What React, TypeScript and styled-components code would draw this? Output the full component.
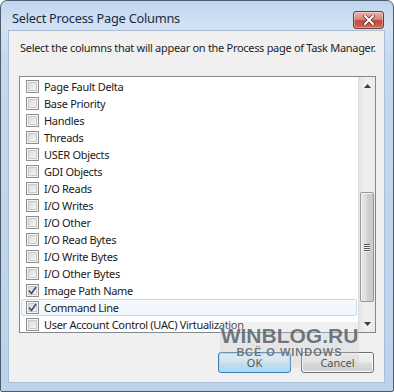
import React from "react";
import styled, { createGlobalStyle } from "styled-components";

const GlobalStyle = createGlobalStyle`
  html, body { margin: 0; padding: 0; background: #ffffff; }
  body { font-family: "Noto Sans", "Liberation Sans", sans-serif; }
  * { box-sizing: border-box; }
`;

const Stage = styled.div`
  position: relative;
  width: 394px;
  height: 392px;
`;

const Window = styled.div`
  width: 394px;
  height: 392px;
  display: flex;
  flex-direction: column;
  border: 1px solid #4d5d6d;
  border-radius: 7px 7px 2px 2px;
  background: linear-gradient(180deg, #bfd5ed 0px, #d4e3f4 26px, #c4d8ee 60px, #bcd3eb 100%);
  overflow: hidden;
`;

const TitleBar = styled.div`
  height: 29px;
  display: flex;
  align-items: flex-end;
  justify-content: space-between;
  padding: 0 9px 0 11px;
  flex-shrink: 0;
`;

const Title = styled.span`
  font-size: 12.8px;
  line-height: 16px;
  color: #1b2c40;
  letter-spacing: -0.25px;
  margin-bottom: 4px;
`;

const CloseButton = styled.div`
  width: 31px;
  height: 18px;
  margin-bottom: 1px;
  border: 1px solid #6e3b36;
  border-radius: 3px;
  background: linear-gradient(180deg, #e9b3a9 0%, #d8877b 45%, #c2473b 55%, #cf6a5d 100%);
  display: flex;
  align-items: center;
  justify-content: center;
  box-shadow: inset 0 0 0 1px rgba(255, 255, 255, 0.35);
`;

const Client = styled.div`
  flex: 1;
  margin: 0 8px 8px 7px;
  background: #f0f0f0;
  border: 1px solid #a9bed6;
  display: flex;
  flex-direction: column;
  padding: 9px 9px 9px 10px;
`;

const Instruction = styled.div`
  font-size: 11px;
  color: #1e1e1e;
  height: 16px;
  line-height: 16px;
  margin-left: 1px;
  letter-spacing: -0.3px;
  white-space: nowrap;
`;

const ListBox = styled.div`
  margin-top: 20px;
  height: 257px;
  width: 357px;
  border: 1px solid #828790;
  background: #ffffff;
  display: flex;
`;

const Rows = styled.div`
  flex: 1;
  display: flex;
  flex-direction: column;
  padding: 1px 0 0 1px;
  overflow: hidden;
`;

const Row = styled.div<{ $selected?: boolean }>`
  height: 17px;
  flex-shrink: 0;
  display: flex;
  align-items: center;
  gap: 5px;
  padding-left: 4px;
  margin-right: 1px;
  border: 1px solid ${(p) => (p.$selected ? "#c4ddf6" : "transparent")};
  border-radius: 2px;
  background: ${(p) => (p.$selected ? "linear-gradient(180deg, #f6fafe, #eef5fd)" : "transparent")};
  font-size: 11px;
  color: #1a1a1a;
  white-space: nowrap;
  letter-spacing: -0.3px;
`;

const Box = styled.div`
  width: 13px;
  height: 13px;
  flex-shrink: 0;
  border: 1px solid #8e8f8f;
  background: #f4f4f4;
  position: relative;
  display: flex;
  align-items: center;
  justify-content: center;
  &::before {
    content: "";
    position: absolute;
    inset: 1px;
    background: linear-gradient(135deg, #d8d8d8 0%, #ebebeb 60%, #f7f7f7 100%);
    border: 1px solid #cacaca;
  }
  svg { position: relative; }
`;

const ScrollBar = styled.div`
  width: 17px;
  display: flex;
  flex-direction: column;
  background: linear-gradient(90deg, #e3e3e3, #f0f0f0 40%, #eaeaea);
  border-left: 1px solid #e0e0e0;
`;

const ArrowCell = styled.div`
  height: 17px;
  display: flex;
  align-items: center;
  justify-content: center;
  flex-shrink: 0;
`;

const Track = styled.div`
  flex: 1;
  display: flex;
  flex-direction: column;
  padding: 0 1px;
`;

const TrackSpace = styled.div<{ $h: number }>`
  height: ${(p) => p.$h}px;
  flex-shrink: 0;
`;

const Thumb = styled.div`
  height: 110px;
  border: 1px solid #979797;
  border-radius: 2px;
  background: linear-gradient(90deg, #e6e6e6 0%, #dcdcdc 45%, #cfcfcf 55%, #c9c9c9 100%);
  box-shadow: inset 1px 1px 0 #f7f7f7;
  display: flex;
  align-items: center;
  justify-content: center;
`;

const Grip = styled.div`
  display: flex;
  flex-direction: column;
  gap: 1px;
  span {
    display: block;
    width: 6px;
    height: 1px;
    background: #555;
    box-shadow: 0 1px 0 #f4f4f4;
  }
`;

const ButtonRow = styled.div`
  margin-top: auto;
  display: flex;
  justify-content: flex-end;
  gap: 10px;
  padding-right: 1px;
`;

const Button = styled.div<{ $default?: boolean }>`
  width: 73px;
  height: 21px;
  border: 1px solid ${(p) => (p.$default ? "#3c7fb1" : "#707070")};
  border-radius: 3px;
  background: ${(p) =>
    p.$default
      ? "linear-gradient(180deg, #eaf6fd 0%, #d9f0fc 45%, #bee6fd 55%, #a7d9f5 100%)"
      : "linear-gradient(180deg, #f2f2f2 0%, #ebebeb 45%, #dddddd 55%, #cfcfcf 100%)"};
  box-shadow: ${(p) => (p.$default ? "inset 0 0 0 1px #9be0f8" : "inset 0 0 0 1px #fbfbfb")};
  display: flex;
  align-items: center;
  justify-content: center;
  font-size: 11px;
  color: #1a1a1a;
`;

const Watermark = styled.div`
  position: absolute;
  left: 220px;
  top: 322px;
  width: 139px;
  height: 46px;
  background: rgba(205, 205, 205, 0.3);
  display: flex;
  flex-direction: column;
  align-items: center;
  font-family: "Liberation Sans", Arial, sans-serif;
  font-weight: bold;
  color: rgba(68, 76, 86, 0.75);
  pointer-events: none;
`;

const WmTitle = styled.div`
  font-size: 21px;
  line-height: 21px;
  margin-top: 3px;
  text-shadow: 0 0 2px rgba(255, 255, 255, 0.6);
`;

const WmSub = styled.div`
  font-size: 11px;
  line-height: 11px;
  letter-spacing: 1px;
  margin-top: 1px;
  text-shadow: 0 0 2px rgba(255, 255, 255, 0.6);
`;

const items: { label: string; checked?: boolean; selected?: boolean }[] = [
  { label: "Page Fault Delta" },
  { label: "Base Priority" },
  { label: "Handles" },
  { label: "Threads" },
  { label: "USER Objects" },
  { label: "GDI Objects" },
  { label: "I/O Reads" },
  { label: "I/O Writes" },
  { label: "I/O Other" },
  { label: "I/O Read Bytes" },
  { label: "I/O Write Bytes" },
  { label: "I/O Other Bytes" },
  { label: "Image Path Name", checked: true },
  { label: "Command Line", checked: true, selected: true },
  { label: "User Account Control (UAC) Virtualization" },
];

const Check = () => (
  <svg width="9" height="9" viewBox="0 0 9 9">
    <path d="M1 4.5 L3.5 7.5 L8 1" fill="none" stroke="#3a4d7a" strokeWidth="1.6" />
  </svg>
);

const CloseX = () => (
  <svg width="12" height="10" viewBox="0 0 12 10">
    <path d="M2 1 L10 9 M10 1 L2 9" stroke="#5b2a25" strokeWidth="3.4" strokeLinecap="square" />
    <path d="M2 1 L10 9 M10 1 L2 9" stroke="#ffffff" strokeWidth="2" strokeLinecap="square" />
  </svg>
);

const UpArrow = () => (
  <svg width="7" height="4" viewBox="0 0 7 4">
    <path d="M0 4 L3.5 0 L7 4 Z" fill="#3b3b3b" />
  </svg>
);

const DownArrow = () => (
  <svg width="7" height="4" viewBox="0 0 7 4">
    <path d="M0 0 L3.5 4 L7 0 Z" fill="#3b3b3b" />
  </svg>
);

export default function App() {
  return (
    <>
      <GlobalStyle />
      <Stage>
        <Window>
          <TitleBar>
            <Title>Select Process Page Columns</Title>
            <CloseButton>
              <CloseX />
            </CloseButton>
          </TitleBar>
          <Client>
            <Instruction>
              Select the columns that will appear on the Process page of Task Manager.
            </Instruction>
            <ListBox>
              <Rows>
                {items.map((it) => (
                  <Row key={it.label} $selected={it.selected}>
                    <Box>{it.checked && <Check />}</Box>
                    {it.label}
                  </Row>
                ))}
              </Rows>
              <ScrollBar>
                <ArrowCell>
                  <UpArrow />
                </ArrowCell>
                <Track>
                  <TrackSpace $h={98} />
                  <Thumb>
                    <Grip>
                      <span />
                      <span />
                      <span />
                      <span />
                    </Grip>
                  </Thumb>
                </Track>
                <ArrowCell>
                  <DownArrow />
                </ArrowCell>
              </ScrollBar>
            </ListBox>
            <ButtonRow>
              <Button $default>OK</Button>
              <Button>Cancel</Button>
            </ButtonRow>
          </Client>
        </Window>
        <Watermark>
          <WmTitle>WINBLOG.RU</WmTitle>
          <WmSub>ВСЁ О WINDOWS</WmSub>
        </Watermark>
      </Stage>
    </>
  );
}
